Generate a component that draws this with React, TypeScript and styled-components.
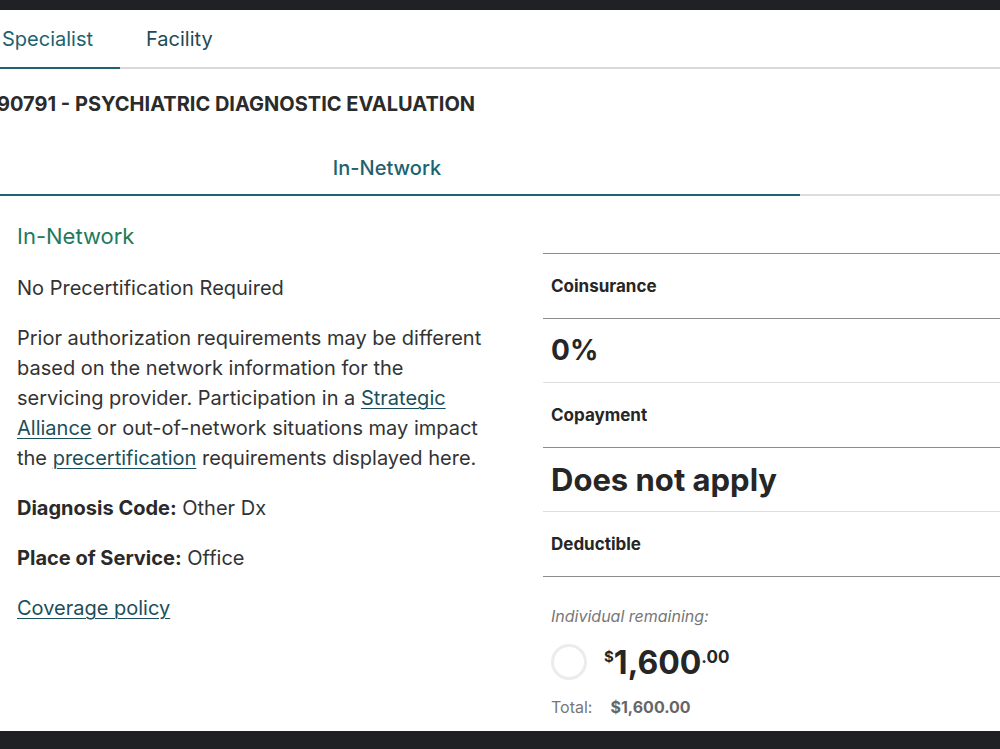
import React from "react";
import styled, { createGlobalStyle } from "styled-components";

const GlobalStyle = createGlobalStyle`
  html, body {
    margin: 0;
    padding: 0;
    background: #202124;
  }
  body {
    font-family: Inter, "Noto Sans", "Liberation Sans", sans-serif;
    color: #333;
  }
`;

const App = () => {
    return (
        <>
            <GlobalStyle />
            <Frame>
                <Page>
                    <TabBar>
                        <Tab active>Specialist</Tab>
                        <Tab>Facility</Tab>
                    </TabBar>
                    <ProcedureTitle>90791 - PSYCHIATRIC DIAGNOSTIC EVALUATION</ProcedureTitle>
                    <NetworkTabs>
                        <NetworkTab>In-Network</NetworkTab>
                    </NetworkTabs>
                    <Body>
                        <Details>
                            <NetworkName>In-Network</NetworkName>
                            <Paragraph>No Precertification Required</Paragraph>
                            <Paragraph>
                                Prior authorization requirements may be different based on the network
                                information for the servicing provider. Participation in a{" "}
                                <Link href="#">Strategic Alliance</Link> or out-of-network situations may
                                impact the <Link href="#">precertification</Link> requirements displayed here.
                            </Paragraph>
                            <Paragraph>
                                <Label>Diagnosis Code:</Label> Other Dx
                            </Paragraph>
                            <Paragraph>
                                <Label>Place of Service:</Label> Office
                            </Paragraph>
                            <Paragraph>
                                <Link href="#">Coverage policy</Link>
                            </Paragraph>
                        </Details>
                        <Costs>
                            <CostRow kind="label">Coinsurance</CostRow>
                            <CostRow kind="value">0%</CostRow>
                            <CostRow kind="label">Copayment</CostRow>
                            <CostRow kind="value" big>Does not apply</CostRow>
                            <CostRow kind="label">Deductible</CostRow>
                            <Remaining>
                                <RemainingLabel>Individual remaining:</RemainingLabel>
                                <AmountLine>
                                    <Ring />
                                    <Amount>
                                        <Sup>$</Sup>1,600<Cents>.00</Cents>
                                    </Amount>
                                </AmountLine>
                                <TotalLine>
                                    <span>Total:</span>
                                    <TotalValue>$1,600.00</TotalValue>
                                </TotalLine>
                            </Remaining>
                        </Costs>
                    </Body>
                </Page>
            </Frame>
        </>
    )
}

export default App;

const Frame = styled.div`
  padding: 10px 0 18px;
  overflow: hidden;
`

const Page = styled.div`
  background: #fff;
  height: 721px;
  overflow: hidden;
`

const TabBar = styled.div`
  display: flex;
  border-bottom: 2px solid #d9d9d9;
  height: 57px;
`

const Tab = styled.div<{ active?: boolean }>`
  display: flex;
  align-items: center;
  padding: 1px 26px 0 2px;
  width: 120px;
  box-sizing: border-box;
  font-size: 20px;
  color: ${p => (p.active ? "#1d6270" : "#1e4a55")};
  margin-bottom: -2px;
  border-bottom: 2px solid ${p => (p.active ? "#1d6270" : "transparent")};
  & + & {
    padding-left: 26px;
  }
`

const ProcedureTitle = styled.div`
  margin: 23px 0 0 -3px;
  font-size: 20px;
  font-weight: 700;
  color: #2b2b2b;
`

const NetworkTabs = styled.div`
  margin-top: 40px;
  display: flex;
  border-bottom: 2px solid #dcdcdc;
`

const NetworkTab = styled.div`
  width: 800px;
  box-sizing: border-box;
  padding: 0 26px 14px 0;
  text-align: center;
  font-size: 20px;
  font-weight: 500;
  color: #1d6270;
  margin-bottom: -2px;
  border-bottom: 2px solid #1d6270;
`

const Body = styled.div`
  display: grid;
  grid-template-columns: 543px 1fr;
`

const Details = styled.div`
  padding: 27px 0 0 17px;
  width: 472px;
`

const NetworkName = styled.div`
  font-size: 22px;
  color: #1e7a5c;
  margin-bottom: 24px;
`

const Paragraph = styled.p`
  margin: 0 0 20px;
  font-size: 20px;
  line-height: 30px;
  color: #333;
`

const Label = styled.b`
  font-weight: 700;
  color: #2a2a2a;
`

const Link = styled.a`
  color: #1b4f5b;
  text-decoration: underline;
  text-decoration-thickness: 1px;
  text-underline-offset: 3px;
`

const Costs = styled.div`
  margin-top: 57px;
  border-top: 1px solid #8c8c8c;
`

const CostRow = styled.div<{ kind: "label" | "value"; big?: boolean }>`
  height: 63.5px;
  display: flex;
  align-items: center;
  padding-left: 8px;
  border-bottom: 1px solid ${p => (p.kind === "label" ? "#8c8c8c" : "#dedede")};
  font-weight: 700;
  color: #262626;
  font-size: ${p => (p.kind === "label" ? "17px" : p.big ? "31px" : "28px")};
`

const Remaining = styled.div`
  padding: 29px 0 0 8px;
`

const RemainingLabel = styled.div`
  font-size: 16px;
  font-style: italic;
  color: #777;
`

const AmountLine = styled.div`
  display: flex;
  align-items: center;
  gap: 17px;
  margin-top: 17px;
`

const Ring = styled.div`
  width: 30px;
  height: 30px;
  border-radius: 50%;
  border: 3px solid #ececec;
`

const Amount = styled.div`
  font-size: 32px;
  font-weight: 700;
  color: #262626;
`

const Sup = styled.span`
  font-size: 15px;
  vertical-align: 12px;
`

const Cents = styled.span`
  font-size: 17px;
  vertical-align: 11px;
`

const TotalLine = styled.div`
  display: flex;
  gap: 18px;
  margin-top: 15px;
  font-size: 16px;
  color: #777;
`

const TotalValue = styled.span`
  font-weight: 700;
  color: #666;
`
